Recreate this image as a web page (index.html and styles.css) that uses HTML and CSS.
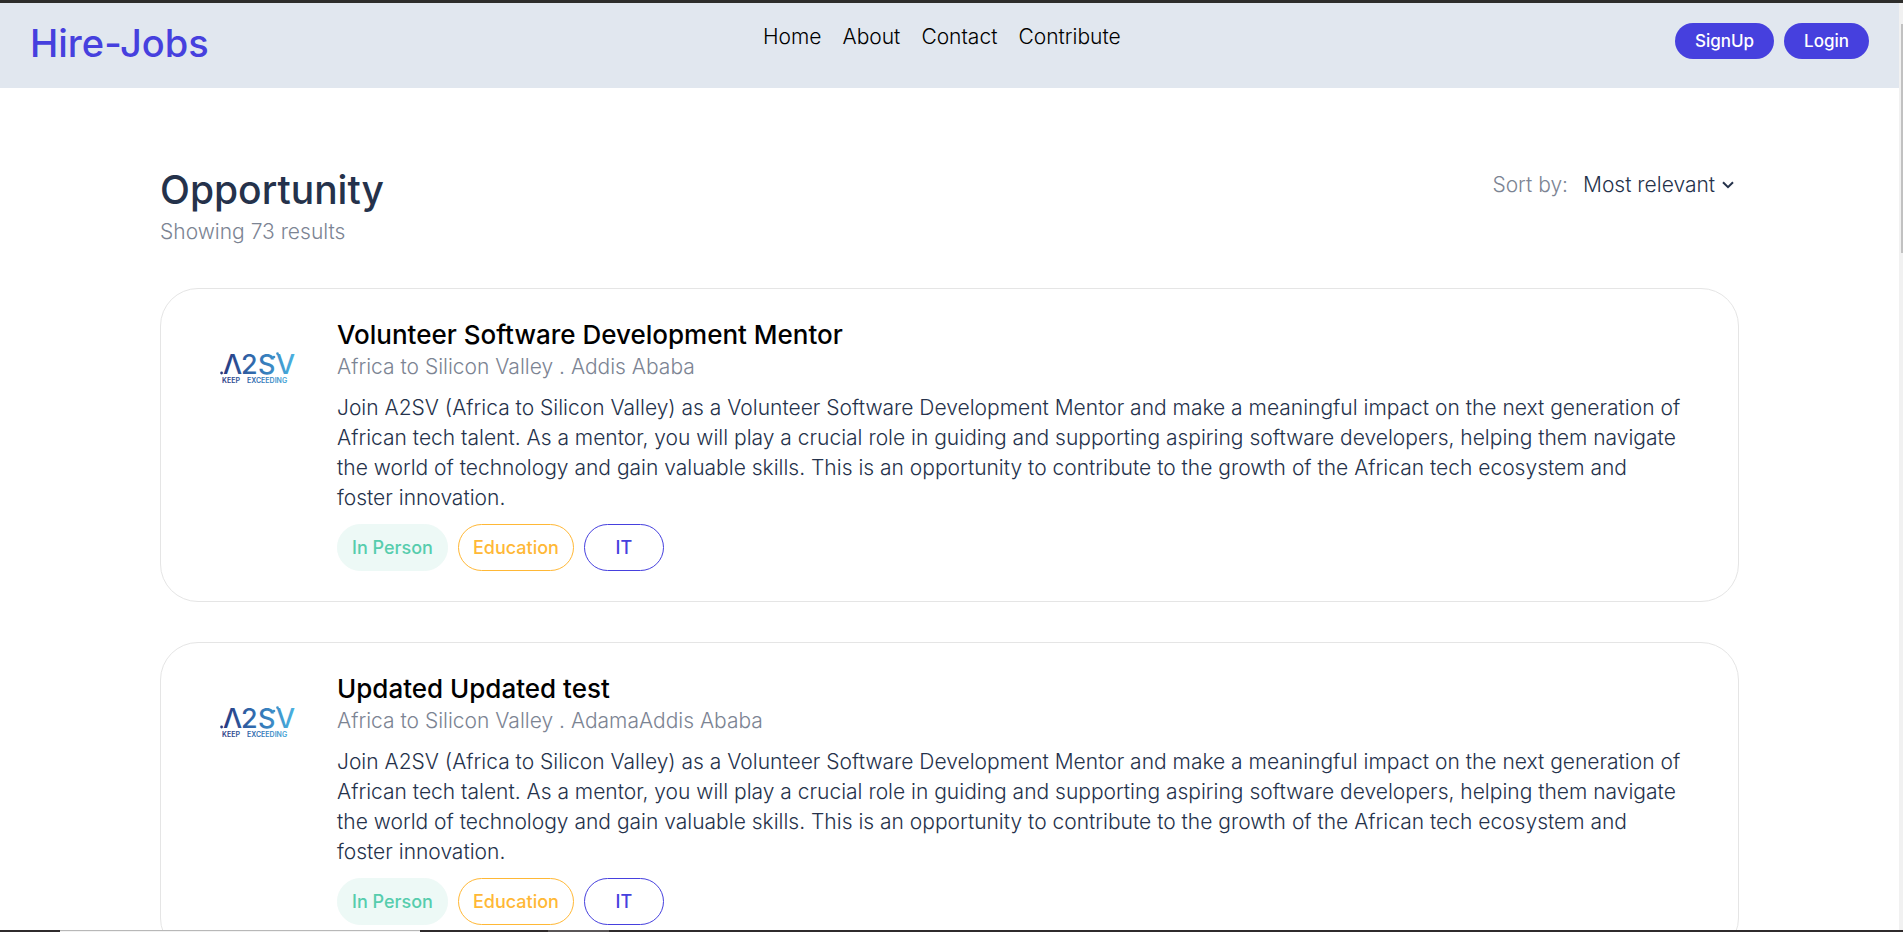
FILE: index.html
```html
<!DOCTYPE html>
<html lang="en">
<head>
<meta charset="utf-8">
<meta name="viewport" content="width=device-width, initial-scale=1">
<title>Hire-Jobs</title>
<link rel="stylesheet" href="styles.css">
</head>
<body>
<svg class="defs" aria-hidden="true">
  <defs>
    <linearGradient id="brand" gradientUnits="userSpaceOnUse" x1="0" y1="0" x2="76" y2="0">
      <stop offset="0" stop-color="#27357d"/>
      <stop offset="0.5" stop-color="#3272b4"/>
      <stop offset="1" stop-color="#4bb4e2"/>
    </linearGradient>
    <symbol id="a2sv" viewBox="0 0 76 32">
      <g fill="url(#brand)">
        <g class="mark">
          <text x="3" y="22">Λ</text>
          <text x="21" y="22">2</text>
          <text x="38" y="22">S</text>
          <text x="56" y="22">V</text>
        </g>
        <circle cx="1.6" cy="21" r="1.4"/>
        <circle cx="54" cy="5" r="1.3"/>
        <circle cx="57.5" cy="1.600" r="1.3"/>
        <g class="motto">
          <text x="2" y="31">KEEP</text>
          <text x="27" y="31">EXCEEDING</text>
        </g>
      </g>
    </symbol>
  </defs>
</svg>
<div class="window">
  <div class="frame-top"></div>
  <div class="viewport">
    <div class="page">
      <header class="header">
        <a class="brand" href="#">Hire-Jobs</a>
        <nav class="nav">
          <a href="#">Home</a>
          <a href="#">About</a>
          <a href="#">Contact</a>
          <a href="#">Contribute</a>
        </nav>
        <div class="auth">
          <button class="btn" type="button">SignUp</button>
          <button class="btn" type="button">Login</button>
        </div>
      </header>
      <main class="main">
        <div class="heading">
          <div>
            <h1 class="title">Opportunity</h1>
            <p class="count">Showing 73 results</p>
          </div>
          <div class="sort">
            <label class="sort-label" for="sort">Sort by:</label>
            <div class="select">
              <select id="sort"><option>Most relevant</option></select>
              <svg class="chevron" viewBox="0 0 12 8" aria-hidden="true"><path d="M1 1.200 6 6.200l5-5"/></svg>
            </div>
          </div>
        </div>
        <article class="card">
          <svg class="logo" role="img" aria-label="A2SV"><use href="#a2sv"/></svg>
          <div class="body">
            <h2 class="job">Volunteer Software Development Mentor</h2>
            <p class="org">Africa to Silicon Valley . Addis Ababa</p>
            <p class="desc">Join A2SV (Africa to Silicon Valley) as a Volunteer Software Development Mentor and make a meaningful impact on the next generation of African tech talent. As a mentor, you will play a crucial role in guiding and supporting aspiring software developers, helping them navigate the world of technology and gain valuable skills. This is an opportunity to contribute to the growth of the African tech ecosystem and foster innovation.</p>
            <div class="tags">
              <button class="tag tag-green" type="button">In Person</button>
              <button class="tag tag-amber" type="button">Education</button>
              <button class="tag tag-indigo" type="button">IT</button>
            </div>
          </div>
        </article>
        <article class="card">
          <svg class="logo" role="img" aria-label="A2SV"><use href="#a2sv"/></svg>
          <div class="body">
            <h2 class="job">Updated Updated test</h2>
            <p class="org">Africa to Silicon Valley . AdamaAddis Ababa</p>
            <p class="desc">Join A2SV (Africa to Silicon Valley) as a Volunteer Software Development Mentor and make a meaningful impact on the next generation of African tech talent. As a mentor, you will play a crucial role in guiding and supporting aspiring software developers, helping them navigate the world of technology and gain valuable skills. This is an opportunity to contribute to the growth of the African tech ecosystem and foster innovation.</p>
            <div class="tags">
              <button class="tag tag-green" type="button">In Person</button>
              <button class="tag tag-amber" type="button">Education</button>
              <button class="tag tag-indigo" type="button">IT</button>
            </div>
          </div>
        </article>
      </main>
    </div>
    <div class="scrollbar"><div class="thumb"></div></div>
  </div>
  <div class="taskbar"><div class="task task-active"></div><div class="task"></div></div>
</div>
</body>
</html>
```
FILE: styles.css
```css
* {
  box-sizing: border-box;
}

body {
  margin: 0;
  background: #fff;
  color: #25324b;
  font-family: Inter, "Liberation Sans", sans-serif;
  font-size: 21px;
  font-weight: 300;
  line-height: 30px;
}

h1, h2, p {
  margin: 0;
}

button, select {
  font: inherit;
  color: inherit;
}

.defs {
  position: absolute;
  width: 0;
  height: 0;
}

.window {
  display: flex;
  flex-direction: column;
  height: 100vh;
}

.frame-top {
  flex: none;
  height: 3px;
  background: #2d2d2b;
}

.viewport {
  display: flex;
  flex: 1;
  min-height: 0;
}

.page {
  flex: 1;
  min-width: 0;
  overflow: hidden;
}

.scrollbar {
  flex: none;
  width: 4px;
  padding: 21px 0 0 2px;
  background: #f1f1f1;
}

.thumb {
  height: 229px;
  background: #c1c1c1;
}

.taskbar {
  display: flex;
  flex: none;
  gap: 128px;
  height: 2px;
  padding-left: 60px;
  background: #2f2b2c;
}

.task {
  width: 61px;
  background: #5a5657;
}

.task-active {
  width: 360px;
  background: #f3f3f3;
  border-top: 1px solid #b8b8b8;
}

.header {
  display: flex;
  justify-content: space-between;
  align-items: flex-start;
  padding: 16px 30px 21px;
  background: #e1e7ef;
}

.header a {
  text-decoration: none;
}

.brand {
  color: #4640de;
  font-size: 38px;
  font-weight: 500;
  line-height: 48px;
}

.nav {
  display: flex;
  gap: 21px;
  padding-top: 3px;
}

.nav a {
  color: #000;
}

.auth {
  display: flex;
  gap: 10px;
  padding-top: 4px;
}

.btn {
  padding: 0 20px;
  border: 0;
  border-radius: 18px;
  background: #4640de;
  color: #fff;
  font-size: 17px;
  font-weight: 500;
  line-height: 36px;
}

.main {
  display: flex;
  flex-direction: column;
  gap: 40px;
  padding: 76px 160px 40px;
}

.heading {
  display: flex;
  justify-content: space-between;
}

.title {
  font-size: 39px;
  font-weight: 500;
  line-height: 52px;
}

.count, .sort-label, .org {
  color: #7c8493;
}

.count, .org {
  line-height: 32px;
}

.sort {
  display: flex;
  align-items: flex-start;
  gap: 15px;
  padding: 6px 5px 0 0;
}

.select {
  display: grid;
  align-items: center;
}

.select select {
  grid-area: 1 / 1;
  padding: 0 18px 0 0;
  border: 0;
  background: none;
  appearance: none;
}

.chevron {
  grid-area: 1 / 1;
  justify-self: end;
  width: 12px;
  height: 8px;
  fill: none;
  stroke: #25324b;
  stroke-width: 2;
  pointer-events: none;
}

.card {
  display: flex;
  gap: 41px;
  padding: 30px 54px 30px 59px;
  border: 1px solid #e5e5e5;
  border-radius: 38px;
}

.logo {
  flex: none;
  width: 76px;
  height: 32px;
  margin-top: 33px;
}

.mark {
  font-size: 27px;
  font-weight: 500;
}

.motto {
  font-size: 7px;
  font-weight: 600;
}

.body {
  flex: 1;
  min-width: 0;
}

.job {
  color: #000;
  font-size: 26px;
  font-weight: 500;
  line-height: 32px;
}

.desc {
  padding: 10px 0 11px;
}

.tags {
  display: flex;
  gap: 10px;
}

.tag {
  min-width: 80px;
  padding: 0 14px;
  border: 1px solid currentColor;
  border-radius: 24px;
  background: #fff;
  font-size: 18px;
  font-weight: 500;
  line-height: 45px;
}

.tag-green {
  border-color: #edf9f6;
  background: #edf9f6;
  color: #56cdad;
}

.tag-amber {
  color: #ffb836;
}

.tag-indigo {
  color: #4640de;
}
```
